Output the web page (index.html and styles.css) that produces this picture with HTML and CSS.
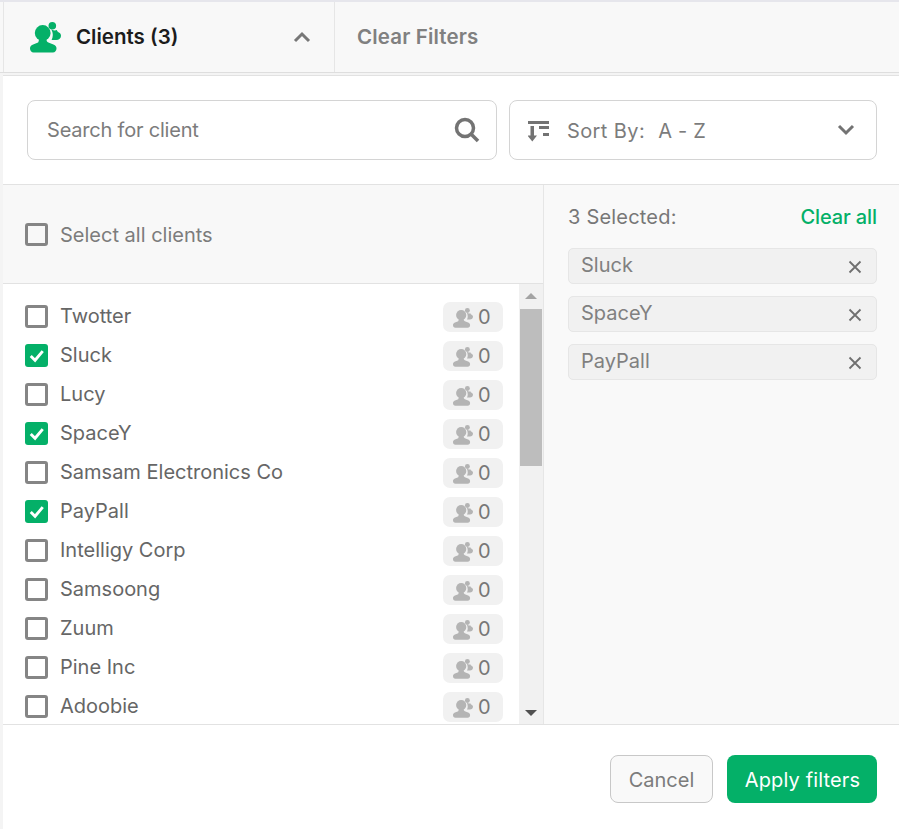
FILE: index.html
```html
<!doctype html>
<html>
<head>
<meta charset="utf-8">
<title>Clients filter</title>
<link rel="stylesheet" href="styles.css">
</head>
<body>
	<svg class="defs" width="0" height="0">
		<symbol id="users" viewBox="0 0 31 31">
			<circle cx="22.300" cy="3.800" r="3.800"/>
			<path d="M21.500 7.500c2.200 1.100 3.800 1 5.300.6 .3 1.100 1.100 1.800 2.100 2.300 1.300.7 2.100 1.800 2.100 3.300 0 2.500-1.900 4.300-4.800 4.300h-4.600c.8-1.400 1.200-3.100 1.200-4.900 0-2.100-.5-4.200-1.800-6.100z"/>
			<circle cx="12.700" cy="11" r="7.900"/>
			<path d="M9 16h7.400c0 3 .6 4 2 4.600l5 2c2.400 1 3.100 2.400 3.100 4 0 2.400-1.500 3.900-3.600 3.900H3.600C1.500 30.500 0 29 0 26.600c0-1.600.7-3 3.100-4l5-2C8.400 20 9 19 9 16z"/>
		</symbol>
	</svg>

	<div class="topbar">
		<div class="tab">
			<svg class="tab-icon"><use href="#users"/></svg>
			<span class="tab-name">Clients (3)</span>
			<svg class="tab-arrow" viewBox="0 0 18 12"><path d="M2 10l7-7 7 7"/></svg>
		</div>
		<a class="clear-filters" href="javascript:;">Clear Filters</a>
	</div>

	<div class="panel">
		<div class="tools">
			<div class="search">
				<span>Search for client</span>
				<svg viewBox="0 0 26 26"><circle cx="11" cy="11" r="8.500"/><path d="M17.500 17.500l6.500 6.500"/></svg>
			</div>
			<div class="sort">
				<svg class="sort-icon" viewBox="0 0 21 21">
					<path d="M0 0h21v3H0z"/>
					<path d="M2.500 5h3.500v9.500h3l-4.700 6-4.800-6h3z"/>
					<path d="M11 5h10v3H11zM15 12h6v3h-6z"/>
				</svg>
				<span class="sort-label">Sort By:</span>
				<span class="sort-value">A - Z</span>
				<svg class="sort-arrow" viewBox="0 0 18 12"><path d="M2 2l7 7 7-7"/></svg>
			</div>
		</div>

		<div class="columns">
			<div class="left">
				<div class="select-all">
					<i class="check"></i>
					<span>Select all clients</span>
				</div>
				<div class="list-wrap">
					<ul class="list">
						<li><i class="check"></i><span class="name">Twotter</span><b class="count"><svg><use href="#users"/></svg>0</b></li>
						<li><i class="check on"><svg viewBox="0 0 24 24"><path d="M6 12.500l4.500 4.500L18.500 7.500"/></svg></i><span class="name">Sluck</span><b class="count"><svg><use href="#users"/></svg>0</b></li>
						<li><i class="check"></i><span class="name">Lucy</span><b class="count"><svg><use href="#users"/></svg>0</b></li>
						<li><i class="check on"><svg viewBox="0 0 24 24"><path d="M6 12.500l4.500 4.500L18.500 7.500"/></svg></i><span class="name">SpaceY</span><b class="count"><svg><use href="#users"/></svg>0</b></li>
						<li><i class="check"></i><span class="name">Samsam Electronics Co</span><b class="count"><svg><use href="#users"/></svg>0</b></li>
						<li><i class="check on"><svg viewBox="0 0 24 24"><path d="M6 12.500l4.500 4.500L18.500 7.500"/></svg></i><span class="name">PayPall</span><b class="count"><svg><use href="#users"/></svg>0</b></li>
						<li><i class="check"></i><span class="name">Intelligy Corp</span><b class="count"><svg><use href="#users"/></svg>0</b></li>
						<li><i class="check"></i><span class="name">Samsoong</span><b class="count"><svg><use href="#users"/></svg>0</b></li>
						<li><i class="check"></i><span class="name">Zuum</span><b class="count"><svg><use href="#users"/></svg>0</b></li>
						<li><i class="check"></i><span class="name">Pine Inc</span><b class="count"><svg><use href="#users"/></svg>0</b></li>
						<li><i class="check"></i><span class="name">Adoobie</span><b class="count"><svg><use href="#users"/></svg>0</b></li>
					</ul>
					<div class="scrollbar">
						<div class="scroll-up"></div>
						<div class="scroll-thumb"></div>
						<div class="scroll-down"></div>
					</div>
				</div>
			</div>

			<div class="right">
				<div class="right-head">
					<span>3 Selected:</span>
					<a href="javascript:;">Clear all</a>
				</div>
				<div class="tag"><span>Sluck</span><svg viewBox="0 0 14 14"><path d="M1.500 1.500l11 11M12.500 1.500l-11 11"/></svg></div>
				<div class="tag"><span>SpaceY</span><svg viewBox="0 0 14 14"><path d="M1.500 1.500l11 11M12.500 1.500l-11 11"/></svg></div>
				<div class="tag"><span>PayPall</span><svg viewBox="0 0 14 14"><path d="M1.500 1.500l11 11M12.500 1.500l-11 11"/></svg></div>
			</div>
		</div>

		<div class="footer">
			<a class="btn cancel" href="javascript:;">Cancel</a>
			<a class="btn apply" href="javascript:;">Apply filters</a>
		</div>
	</div>
</body>
</html>
```

FILE: styles.css
```css
*{
	margin: 0;
	padding: 0;
	box-sizing: border-box;
	list-style: none;
}
html,body{
	height: 829px;
	overflow: hidden;
}
body{
	background: #f4f4f4;
	font-family: "Inter", "Liberation Sans", sans-serif;
	font-size: 20px;
	color: #6f6f6f;
}
a{
	text-decoration: none;
}
.defs{
	display: block;
	height: 0;
}

/* top bar */
.topbar{
	height: 73px;
	display: flex;
	background: #f8f8f8;
	border-top: 2px solid #e6e6ec;
	border-bottom: 1px solid #dedede;
}
.tab{
	margin-left: 3px;
	padding: 0 23px 0 26px;
	display: flex;
	align-items: center;
	border-left: 1px solid #e6e6e6;
	border-right: 1px solid #e6e6e6;
	box-sizing: content-box;
	width: 281px;
}
.tab-icon{
	width: 31px;
	height: 31px;
	fill: #04b068;
	margin-right: 15px;
}
.tab-name{
	flex: 1;
	margin-top: -2px;
	font-size: 20.500px;
	font-weight: 600;
	color: #1c1c1c;
}
.tab-arrow{
	width: 18px;
	height: 12px;
	fill: none;
	stroke: #777;
	stroke-width: 3;
}
.clear-filters{
	margin: -2px 0 0 22px;
	align-self: center;
	font-size: 20.500px;
	font-weight: 600;
	letter-spacing: 0.15px;
	color: #808080;
}

/* panel */
.panel{
	height: 754px;
	margin: 2px 0 0 3px;
	display: flex;
	flex-direction: column;
	background: #fff;
	border-top: 1px solid #e2e2e2;
}
.tools{
	height: 109px;
	padding: 24px 22px 24px 24px;
	display: flex;
	gap: 12px;
	flex-shrink: 0;
	border-bottom: 1px solid #e2e2e2;
}
.search,.sort{
	height: 60px;
	display: flex;
	align-items: center;
	border: 1px solid #d4d4d4;
	border-radius: 8px;
}
.search{
	width: 470px;
	padding: 0 16px 0 19px;
	justify-content: space-between;
	color: #7c7c7c;
	letter-spacing: -0.2px;
}
.search svg{
	width: 26px;
	height: 26px;
	fill: none;
	stroke: #737373;
	stroke-width: 3.500;
}
.sort{
	width: 368px;
	padding: 0 21px 0 18px;
	color: #7c7c7c;
}
.sort span{
	margin-top: 2px;
}
.sort-icon{
	width: 21px;
	height: 21px;
	margin-top: 2px;
	fill: #737373;
	margin-right: 18px;
}
.sort-label{
	margin-right: 13px;
	letter-spacing: 0.4px;
}
.sort-value{
	letter-spacing: 0.2px;
}
.sort-arrow{
	margin-left: auto;
	width: 18px;
	height: 12px;
	fill: none;
	stroke: #737373;
	stroke-width: 3;
}

/* columns */
.columns{
	height: 540px;
	display: flex;
	flex-shrink: 0;
	border-bottom: 1px solid #e2e2e2;
}
.left{
	width: 541px;
	display: flex;
	flex-direction: column;
	border-right: 1px solid #e6e6e6;
}
.select-all{
	height: 99px;
	flex-shrink: 0;
	padding-left: 22px;
	display: flex;
	align-items: center;
	background: #f8f8f8;
	border-bottom: 1px solid #e2e2e2;
	color: #7c7c7c;
}
.select-all span{
	margin-top: 2px;
}
.check{
	width: 23px;
	height: 23px;
	flex-shrink: 0;
	margin-right: 12px;
	display: block;
	background: #fff;
	border: 3px solid #858585;
	border-radius: 3px;
}
.select-all .check{
	background: #f8f8f8;
}
.check.on{
	background: #04b068;
	border: 0;
}
.check svg{
	display: block;
	width: 23px;
	height: 23px;
	fill: none;
	stroke: #fff;
	stroke-width: 3;
}
.list-wrap{
	flex: 1;
	min-height: 0;
	display: flex;
}
.list{
	flex: 1;
	overflow: hidden;
	padding: 13px 16px 0 22px;
}
.list li{
	height: 39px;
	display: flex;
	align-items: center;
}
.name{
	flex: 1;
	margin-top: -2px;
	color: #666;
}
.count{
	width: 60px;
	height: 30px;
	margin-top: 1px;
	padding-left: 10px;
	display: flex;
	align-items: center;
	background: #f1f1f1;
	border-radius: 7px;
	font-weight: 400;
	color: #777;
}
.count svg{
	width: 20px;
	height: 20px;
	margin-top: 1px;
	fill: #b4b4b4;
	margin-right: 5px;
}
.scrollbar{
	width: 24px;
	flex-shrink: 0;
	display: flex;
	flex-direction: column;
	align-items: center;
	background: #f1f1f1;
}
.scroll-up{
	height: 25px;
	flex-shrink: 0;
	width: 100%;
	position: relative;
}
.scroll-up:after{
	content: "";
	position: absolute;
	left: 6px;
	top: 9px;
	border: 6px solid transparent;
	border-top: 0;
	border-bottom: 6px solid #a3a3a3;
}
.scroll-thumb{
	width: 22px;
	height: 157px;
	flex-shrink: 0;
	background: #bdbdbd;
}
.scroll-down{
	flex: 1;
	width: 100%;
	position: relative;
}
.scroll-down:after{
	content: "";
	position: absolute;
	left: 6px;
	bottom: 8px;
	border: 6px solid transparent;
	border-bottom: 0;
	border-top: 6px solid #505050;
}

/* selected */
.right{
	flex: 1;
	padding: 0 22px 0 24px;
	background: #f9f9f9;
}
.right-head{
	height: 63px;
	padding-top: 20px;
	display: flex;
	justify-content: space-between;
	color: #777;
}
.right-head span{
	letter-spacing: 0.2px;
}
.right-head a{
	color: #04b068;
	font-weight: 500;
	letter-spacing: -0.1px;
}
.tag{
	height: 36px;
	margin-bottom: 12px;
	padding: 0 13px 0 12px;
	display: flex;
	align-items: center;
	justify-content: space-between;
	background: #f1f1f1;
	border: 1px solid #e6e6e6;
	border-radius: 5px;
	color: #808080;
}
.tag span{
	margin-top: -2px;
}
.tag svg{
	width: 14px;
	height: 14px;
	margin: 1px 1px 0 0;
	fill: none;
	stroke: #6f6f6f;
	stroke-width: 1.800;
}

/* footer */
.footer{
	flex: 1;
	padding: 30px 22px 0 0;
	display: flex;
	justify-content: flex-end;
	gap: 14px;
	align-items: flex-start;
}
.btn{
	height: 48px;
	padding-top: 2px;
	display: flex;
	align-items: center;
	justify-content: center;
	border-radius: 8px;
}
.cancel{
	width: 103px;
	background: #f9f9f9;
	border: 1px solid #c8c8c8;
	color: #7c7c7c;
}
.apply{
	width: 150px;
	padding-left: 1px;
	background: #04b068;
	color: #fff;
	font-weight: 400;
	letter-spacing: 0.15px;
}
```
